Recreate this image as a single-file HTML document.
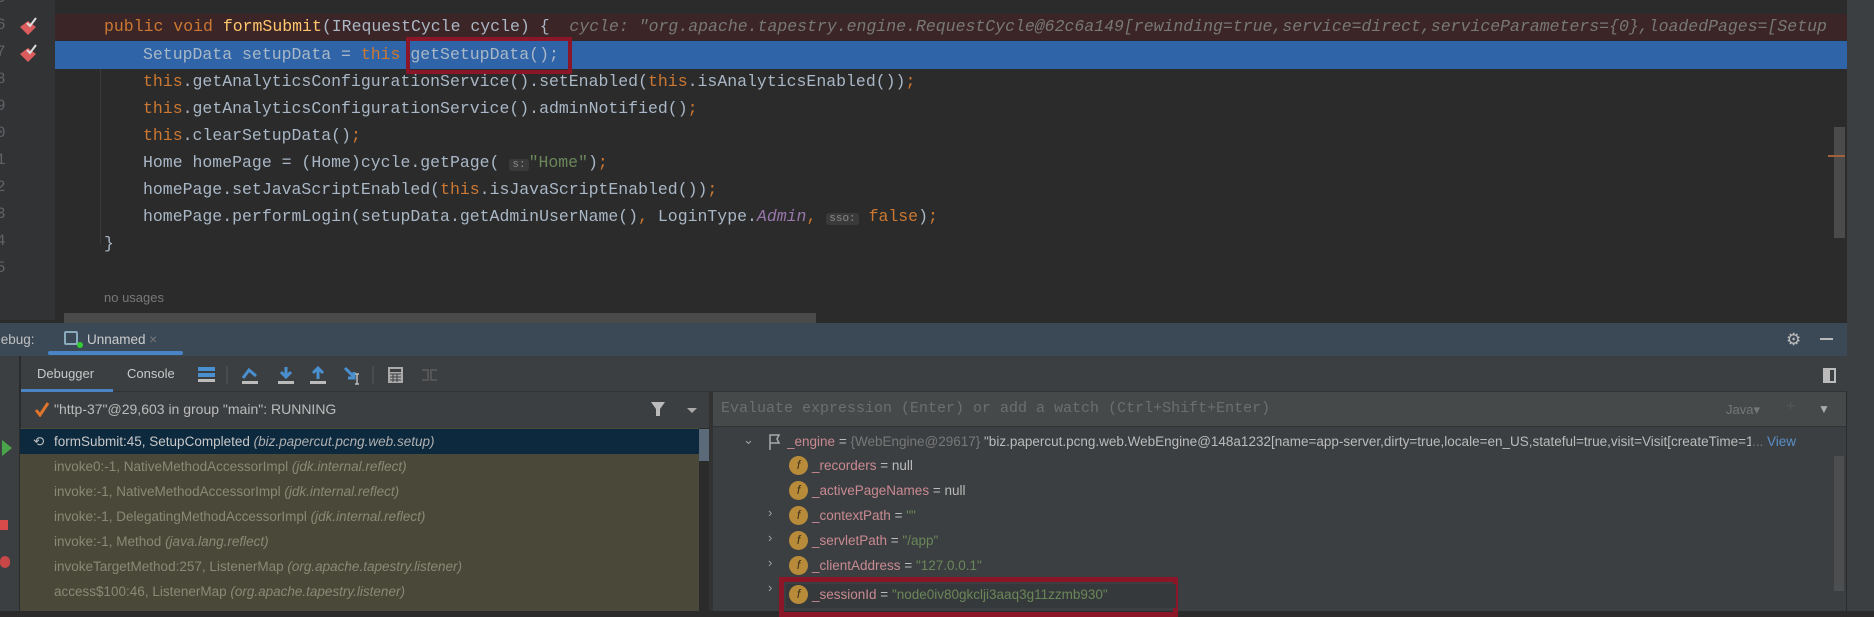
<!DOCTYPE html>
<html><head><meta charset="utf-8"><style>
*{margin:0;padding:0;box-sizing:border-box}
body{width:1874px;height:611px;overflow:hidden;background:#2b2b2b;position:relative;font-family:"Liberation Sans",sans-serif}
.a{position:absolute;white-space:nowrap}
.m{font-family:"Liberation Mono",monospace;font-size:16.5px;color:#a9b7c6;line-height:27px}
.k{color:#cc7832}.f{color:#ffc66d}.s{color:#6a8759}.g{color:#787878;font-style:italic}.p{color:#9876aa;font-style:italic}
.h{font-size:11px;color:#8a8a8a;background:#3a3a3a;padding:0 3px;border-radius:3px}
.ln{color:#606366;font-family:"Liberation Mono",monospace;font-size:16px;line-height:27px}
.d{font-size:13.5px;color:#bbbbbb;line-height:25px}
.fr{font-size:13.5px;color:#8a8975;line-height:25px;height:25px;left:20px;width:679px;padding-left:34px}
.fr i{font-style:italic}
.v{font-size:13.5px;color:#bbbbbb;line-height:25px}
.nm{color:#c98a92}
.ic{position:absolute;width:19px;height:19px;border-radius:50%;background:#b88b3a;color:#3a2f1a;font-size:12px;line-height:19px;text-align:center;font-style:italic}
.ch{position:absolute;color:#a0a0a0;font-size:13px}
</style></head><body>
<!-- gutter -->
<div class="a" style="left:0;top:0;width:55px;height:320px;background:#313335"></div>
<div class="a ln" style="left:-4px;top:-15px">5</div>
<div class="a ln" style="left:-4px;top:12px">6</div>
<div class="a ln" style="left:-4px;top:39px">7</div>
<div class="a ln" style="left:-4px;top:66px">8</div>
<div class="a ln" style="left:-4px;top:93px">9</div>
<div class="a ln" style="left:-4px;top:120px">0</div>
<div class="a ln" style="left:-4px;top:147px">1</div>
<div class="a ln" style="left:-4px;top:174px">2</div>
<div class="a ln" style="left:-4px;top:201px">3</div>
<div class="a ln" style="left:-4px;top:228px">4</div>
<div class="a ln" style="left:-4px;top:255px">5</div>
<svg class="a" style="left:18px;top:16px" width="22" height="52"><path d="M2 11 L10 5 L18 11 L10 19Z" fill="#db5c5c"/><path d="M9 7l3 3 6-8" stroke="#ddd" stroke-width="2" fill="none"/><path d="M2 38 L10 32 L18 38 L10 46Z" fill="#db5c5c"/><path d="M9 34l3 3 6-8" stroke="#ddd" stroke-width="2" fill="none"/></svg>
<!-- editor rows -->
<div class="a" style="left:55px;top:14px;width:1792px;height:26px;background:#3b2526"></div>
<div class="a" style="left:55px;top:41px;width:1792px;height:28px;background:#2f65a8"></div>
<div class="a" style="left:100px;top:69px;width:1px;height:175px;background:#3b3b3b"></div>
<div class="a m" style="left:104px;top:13px;width:1743px;overflow:hidden"><span class="k">public void </span><span class="f">formSubmit</span>(IRequestCycle cycle) {&nbsp; <span class="g">cycle: "org.apache.tapestry.engine.RequestCycle@62c6a149[rewinding=true,service=direct,serviceParameters={0},loadedPages=[Setup</span></div>
<div class="a m" style="left:143px;top:41px">SetupData setupData = <span class="k">this</span> getSetupData();</div>
<div class="a m" style="left:143px;top:68px"><span class="k">this</span>.getAnalyticsConfigurationService().setEnabled(<span class="k">this</span>.isAnalyticsEnabled())<span class="k">;</span></div>
<div class="a m" style="left:143px;top:95px"><span class="k">this</span>.getAnalyticsConfigurationService().adminNotified()<span class="k">;</span></div>
<div class="a m" style="left:143px;top:122px"><span class="k">this</span>.clearSetupData()<span class="k">;</span></div>
<div class="a m" style="left:143px;top:149px">Home homePage = (Home)cycle.getPage( <span class="h">s:</span><span class="s">"Home"</span>)<span class="k">;</span></div>
<div class="a m" style="left:143px;top:176px">homePage.setJavaScriptEnabled(<span class="k">this</span>.isJavaScriptEnabled())<span class="k">;</span></div>
<div class="a m" style="left:143px;top:203px">homePage.performLogin(setupData.getAdminUserName()<span class="k">,</span> LoginType.<span class="p">Admin</span><span class="k">,</span> <span class="h">sso:</span> <span class="k">false</span>)<span class="k">;</span></div>
<div class="a m" style="left:104px;top:230px">}</div>
<div class="a" style="left:104px;top:290px;font-size:13px;color:#787878">no usages</div>
<div class="a" style="left:64px;top:313px;width:752px;height:10px;background:#4a4a4a"></div>
<div class="a" style="left:406px;top:37px;width:166px;height:37px;border:4px solid #8b1628"></div>
<!-- right strip -->
<div class="a" style="left:1847px;top:0;width:27px;height:611px;background:#3c3f41"></div>
<div class="a" style="left:1834px;top:127px;width:11px;height:111px;background:#4b4b4b"></div>
<div class="a" style="left:1828px;top:155px;width:17px;height:2px;background:#a0603a"></div>
<!-- debug tab bar -->
<div class="a" style="left:0;top:323px;width:1847px;height:33px;background:#3b4856"></div>
<div class="a d" style="left:-9px;top:327px;color:#c0c0c0">Debug:</div>
<div class="a" style="left:64px;top:331px;width:14px;height:14px;border:2px solid #8ab;border-radius:2px"></div>
<div class="a" style="left:77px;top:342px;width:6px;height:6px;background:#3c3;border-radius:50%"></div>
<div class="a d" style="left:87px;top:327px;color:#ccc">Unnamed <span style="color:#777">×</span></div>
<div class="a" style="left:48px;top:351px;width:135px;height:4px;background:#4a84c4;border-radius:2px"></div>
<div class="a" style="left:1786px;top:330px;font-size:17px;color:#bbb">⚙</div>
<div class="a" style="left:1820px;top:338px;width:13px;height:2px;background:#bbb"></div>
<!-- left col -->
<div class="a" style="left:0;top:356px;width:20px;height:255px;background:#3c3f41;border-right:1px solid #2b2b2b"></div>
<div class="a" style="left:2px;top:440px;width:0;height:0;border-top:8px solid transparent;border-bottom:8px solid transparent;border-left:10px solid #4aa54a"></div>
<div class="a" style="left:0;top:520px;width:8px;height:10px;background:#d94a4a"></div>
<div class="a" style="left:0;top:556px;width:10px;height:12px;background:#c84848;border-radius:5px"></div>
<!-- toolbar -->
<div class="a" style="left:21px;top:356px;width:1826px;height:36px;background:#3c3f41;border-bottom:1px solid #333"></div>
<div class="a d" style="left:37px;top:361px;color:#c8c8c8;font-size:13px">Debugger</div>
<div class="a d" style="left:127px;top:361px;color:#c8c8c8;font-size:13px">Console</div>
<div class="a" style="left:21px;top:389px;width:92px;height:3px;background:#4a84c4"></div>
<svg class="a" style="left:195px;top:364px" width="250" height="22">
<rect x="3" y="3" width="17" height="4" fill="#4a90d0"/><rect x="3" y="9" width="17" height="4" fill="#4a90d0"/><rect x="3" y="15" width="17" height="3" fill="#bbb"/>
<line x1="32" y1="2" x2="32" y2="20" stroke="#555"/>
<path d="M48 14 L54 6 L61 12" stroke="#4a90d0" stroke-width="3" fill="none"/><rect x="47" y="17" width="16" height="3" fill="#bbb"/>
<path d="M91 3 V12 M86 8 L91 13 L96 8" stroke="#4a90d0" stroke-width="3" fill="none"/><rect x="83" y="17" width="16" height="3" fill="#bbb"/>
<path d="M123 15 V5 M118 9 L123 4 L128 9" stroke="#4a90d0" stroke-width="3" fill="none"/><rect x="115" y="17" width="16" height="3" fill="#bbb"/>
<path d="M150 4 L159 13 M153 14 H159 V8" stroke="#4a90d0" stroke-width="3" fill="none"/><path d="M162 10 V20 M160 10 H164 M160 20 H164" stroke="#bbb" stroke-width="1.5"/>
<line x1="178" y1="2" x2="178" y2="20" stroke="#555"/>
<rect x="193" y="3" width="15" height="16" fill="#aaa"/><rect x="195" y="5" width="11" height="3" fill="#3c3f41"/><path d="M195 10h11M195 13h11M195 16h11M198 10v8M202 10v8" stroke="#3c3f41"/>
<path d="M227 6h6v10h-6M242 6h-6v10h6" stroke="#555" stroke-width="2" fill="none"/>
</svg>
<!-- thread row -->
<div class="a" style="left:21px;top:392px;width:688px;height:36px;background:#3c3f41"></div>
<svg class="a" style="left:34px;top:401px" width="16" height="16"><path d="M2 9 L6 14 L14 2" stroke="#e0742b" stroke-width="3" fill="none"/></svg>
<div class="a d" style="left:54px;top:397px;font-size:14px">"http-37"@29,603 in group "main": RUNNING</div>
<svg class="a" style="left:650px;top:400px" width="50" height="20"><path d="M1 2 H15 L10 9 V16 H6 V9Z" fill="#bbb"/><path d="M37 8 H47 L42 13Z" fill="#aaa"/></svg>
<!-- frames -->
<div class="a" style="left:20px;top:428px;width:679px;height:183px;background:#4a4839"></div>
<div class="a" style="left:20px;top:429px;width:679px;height:25px;background:#0d293e"></div>
<div class="a d" style="left:33px;top:429px;color:#bbb">⟲</div>
<div class="a d" style="left:54px;top:429px;color:#c8c8c8">formSubmit:45, SetupCompleted <i style="color:#b0b0b0">(biz.papercut.pcng.web.setup)</i></div>
<div class="a fr" style="top:454px">invoke0:-1, NativeMethodAccessorImpl <i>(jdk.internal.reflect)</i></div>
<div class="a fr" style="top:479px">invoke:-1, NativeMethodAccessorImpl <i>(jdk.internal.reflect)</i></div>
<div class="a fr" style="top:504px">invoke:-1, DelegatingMethodAccessorImpl <i>(jdk.internal.reflect)</i></div>
<div class="a fr" style="top:529px">invoke:-1, Method <i>(java.lang.reflect)</i></div>
<div class="a fr" style="top:554px">invokeTargetMethod:257, ListenerMap <i>(org.apache.tapestry.listener)</i></div>
<div class="a fr" style="top:579px">access$100:46, ListenerMap <i>(org.apache.tapestry.listener)</i></div>
<div class="a" style="left:699px;top:429px;width:10px;height:32px;background:#5a6a78"></div>
<div class="a" style="left:709px;top:392px;width:4px;height:219px;background:#323232"></div>
<!-- variables -->
<div class="a" style="left:713px;top:392px;width:1133px;height:219px;background:#3c3f41"></div>
<div class="a" style="left:713px;top:392px;width:1133px;height:35px;background:#45494a;border-bottom:1px solid #333"></div>
<div class="a" style="left:721px;top:400px;font-family:'Liberation Mono',monospace;font-size:15px;color:#6e6e6e">Evaluate expression (Enter) or add a watch (Ctrl+Shift+Enter)</div>
<div class="a" style="left:1726px;top:402px;font-size:13px;color:#777">Java▾</div>
<div class="a" style="left:1786px;top:398px;font-size:16px;color:#555">+</div>
<div class="a" style="left:1818px;top:402px;font-size:12px;color:#aaa">▼</div>
<div class="a" style="left:1823px;top:368px;width:13px;height:15px;border:2px solid #bbb;border-left-width:7px"></div>
<div class="a" style="left:1834px;top:456px;width:10px;height:135px;background:#4c4e50"></div>
<div class="a ch" style="left:743px;top:432px">⌄</div>
<svg class="a" style="left:768px;top:433px" width="14" height="18"><path d="M2 17 V2 H11 L9 6 L11 10 H2" stroke="#aaa" stroke-width="1.5" fill="none"/></svg>
<div class="a v" style="left:787px;top:429px;width:964px;overflow:hidden"><span class="nm">_engine</span> = <span style="color:#787878">{WebEngine@29617}</span> "biz.papercut.pcng.web.WebEngine@148a1232[name=app-server,dirty=true,locale=en_US,stateful=true,visit=Visit[createTime=1]</div>
<div class="a v" style="left:1752px;top:429px;color:#777">...&nbsp;<span style="color:#5a8fc8">View</span></div>
<div class="ic" style="left:789px;top:456px">f</div><div class="a v" style="left:812px;top:453px"><span class="nm">_recorders</span> = null</div>
<div class="ic" style="left:789px;top:481px">f</div><div class="a v" style="left:812px;top:478px"><span class="nm">_activePageNames</span> = null</div>
<div class="a ch" style="left:768px;top:505px">›</div><div class="ic" style="left:789px;top:506px">f</div><div class="a v" style="left:812px;top:503px"><span class="nm">_contextPath</span> = <span class="s">""</span></div>
<div class="a ch" style="left:768px;top:530px">›</div><div class="ic" style="left:789px;top:531px">f</div><div class="a v" style="left:812px;top:528px"><span class="nm">_servletPath</span> = <span class="s">"/app"</span></div>
<div class="a ch" style="left:768px;top:555px">›</div><div class="ic" style="left:789px;top:556px">f</div><div class="a v" style="left:812px;top:553px"><span class="nm">_clientAddress</span> = <span class="s">"127.0.0.1"</span></div>
<div class="a" style="left:779px;top:577px;width:399px;height:40px;border:5px solid #8b1628"></div>
<div class="a" style="left:786px;top:584px;width:390px;height:24px;background:#36393b"></div>
<div class="a ch" style="left:768px;top:580px">›</div><div class="ic" style="left:789px;top:585px">f</div><div class="a v" style="left:812px;top:582px"><span class="nm">_sessionId</span> = <span class="s">"node0iv80gkclji3aaq3g11zzmb930"</span></div>
</body></html>
